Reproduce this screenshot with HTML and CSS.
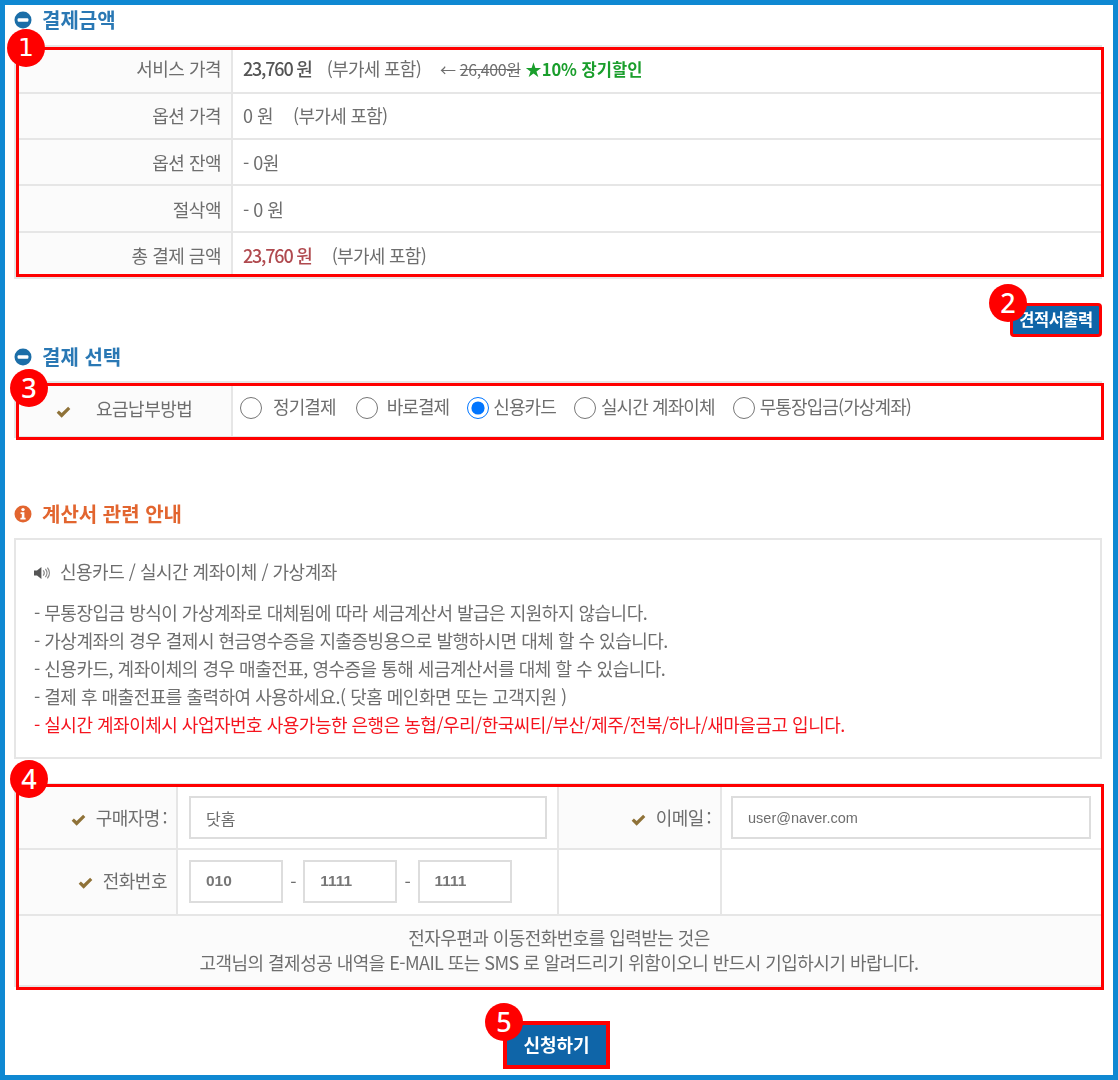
FILE: index.html
```html
<!DOCTYPE html>
<html lang="ko">
<head>
  <meta charset="UTF-8">
  <title>결제금액</title>
  <link rel="stylesheet" href="styles.css">
</head>
<body>
  <svg class="defs" width="0" height="0">
    <symbol id="ico-minus" viewBox="0 0 18 18">
      <circle cx="9" cy="9" r="8.5" fill="currentColor"/>
      <rect x="3.6" y="7.2" width="10.8" height="3.6" rx="1" fill="#fff"/>
    </symbol>
    <symbol id="ico-info" viewBox="0 0 18 18">
      <circle cx="9" cy="9" r="8.5" fill="currentColor"/>
      <circle cx="9" cy="4.6" r="1.7" fill="#fff"/>
      <path d="M6.6 7.2h3.8v5.6h1.2v1.7H6.4v-1.7h1.4V8.9H6.6z" fill="#fff"/>
    </symbol>
    <symbol id="ico-check" viewBox="0 0 16 13">
      <path d="M0.6 7.2 L3 4.8 L6 7.7 L13 0.8 L15.4 3.2 L6 12.6 Z" fill="currentColor"/>
    </symbol>
    <symbol id="ico-sound" viewBox="0 0 16 14">
      <path d="M0 4.6h3L7.4 1v12L3 9.4H0z" fill="#555"/>
      <path d="M9.2 4.4c1.2 1.5 1.2 3.7 0 5.2M11.4 2.8c2 2.4 2 6 0 8.4M13.4 1.6c2.6 3.2 2.6 7.6 0 10.8" fill="none" stroke="#888" stroke-width="1.3"/>
    </symbol>
  </svg>

  <div class="frame">
    <h2 class="head head-blue"><svg class="head-ico"><use href="#ico-minus"/></svg>결제금액</h2>
    <div class="box">
      <table class="tbl tbl-price">
        <tr><th>서비스 가격</th><td><span class="strong">23,760 원</span><span class="tax tax-first">(부가세 포함)</span><span class="was">← <s>26,400원</s></span> <span class="sale">★10% 장기할인</span></td></tr>
        <tr><th>옵션 가격</th><td>0 원<span class="tax">(부가세 포함)</span></td></tr>
        <tr><th>옵션 잔액</th><td>- 0원</td></tr>
        <tr><th>절삭액</th><td>- 0 원</td></tr>
        <tr><th>총 결제 금액</th><td><span class="strong total">23,760 원</span><span class="tax">(부가세 포함)</span></td></tr>
      </table>
      <span class="mark mark-price"></span>
      <span class="badge badge-1">1</span>
    </div>

    <div class="quote-row">
      <a class="btn-quote"><span class="btn-text">견적서출력</span><span class="badge badge-2">2</span></a>
    </div>

    <h2 class="head head-blue head-pay"><svg class="head-ico"><use href="#ico-minus"/></svg>결제 선택</h2>
    <div class="box">
      <table class="tbl tbl-pay">
        <tr>
          <th><svg class="check"><use href="#ico-check"/></svg>요금납부방법</th>
          <td>
            <div class="radios">
              <label class="r1"><input type="radio" name="pay">정기결제</label>
              <label class="r2"><input type="radio" name="pay">바로결제</label>
              <label class="r3"><input type="radio" name="pay" checked>신용카드</label>
              <label class="r4"><input type="radio" name="pay">실시간 계좌이체</label>
              <label class="r5"><input type="radio" name="pay">무통장입금(가상계좌)</label>
            </div>
          </td>
        </tr>
      </table>
      <span class="mark mark-pay"></span>
      <span class="badge badge-3">3</span>
    </div>

    <h2 class="head head-orange"><svg class="head-ico"><use href="#ico-info"/></svg>계산서 관련 안내</h2>
    <div class="notice">
      <p class="notice-title"><svg class="sound"><use href="#ico-sound"/></svg>신용카드 / 실시간 계좌이체 / 가상계좌</p>
      <p>- 무통장입금 방식이 가상계좌로 대체됨에 따라 세금계산서 발급은 지원하지 않습니다.</p>
      <p>- 가상계좌의 경우 결제시 현금영수증을 지출증빙용으로 발행하시면 대체 할 수 있습니다.</p>
      <p>- 신용카드, 계좌이체의 경우 매출전표, 영수증을 통해 세금계산서를 대체 할 수 있습니다.</p>
      <p>- 결제 후 매출전표를 출력하여 사용하세요.( 닷홈 메인화면 또는 고객지원 )</p>
      <p class="warn">- 실시간 계좌이체시 사업자번호 사용가능한 은행은 농협/우리/한국씨티/부산/제주/전북/하나/새마을금고 입니다.</p>
    </div>

    <div class="box box-buyer">
      <table class="tbl tbl-buyer">
        <colgroup><col class="c1"><col class="c2"><col class="c3"><col></colgroup>
        <tr class="row-name">
          <th><svg class="check"><use href="#ico-check"/></svg>구매자명 :</th>
          <td class="inputs"><input class="field" type="text" value="닷홈"></td>
          <th><svg class="check"><use href="#ico-check"/></svg>이메일 :</th>
          <td class="last"><input class="field field-mail" type="text" value="user@naver.com"></td>
        </tr>
        <tr class="row-tel">
          <th><svg class="check"><use href="#ico-check"/></svg>전화번호</th>
          <td class="inputs">
            <div class="phone">
              <input class="field field-tel" type="text" value="010"><span>-</span>
              <input class="field field-tel" type="text" value="1111"><span>-</span>
              <input class="field field-tel" type="text" value="1111">
            </div>
          </td>
          <td></td>
          <td class="last"></td>
        </tr>
        <tr>
          <td class="note" colspan="4">전자우편과 이동전화번호를 입력받는 것은<br>고객님의 결제성공 내역을 E-MAIL 또는 SMS 로 알려드리기 위함이오니 반드시 기입하시기 바랍니다.</td>
        </tr>
      </table>
      <span class="mark mark-buyer"></span>
      <span class="badge badge-4">4</span>
    </div>

    <div class="submit-row">
      <a class="btn-submit"><span class="btn-text">신청하기</span><span class="badge badge-5">5</span></a>
    </div>
  </div>
</body>
</html>
```

FILE: styles.css
```css
* {
  box-sizing: border-box;
}
body {
  margin: 0;
  background: #fff;
  font-family: "Noto Sans CJK KR", "Noto Sans", sans-serif;
  font-size: 18px;
  letter-spacing: -.5px;
  color: #6e6e6e;
}
.defs {
  position: absolute;
}
.frame {
  height: 1080px;
  border: 5px solid #0f88d2;
  padding: 0 9px 0 9px;
  overflow: hidden;
}

/* headings */
.head {
  display: flex;
  align-items: center;
  height: 30px;
  margin: 0 0 10px;
  padding-bottom: 1px;
  font-size: 20px;
  font-weight: 700;
  letter-spacing: 0;
  filter: blur(.5px);
}
.head-blue {
  color: #2a78b4;
}
.head-orange {
  color: #e2652f;
  margin: 61px 0 9px;
}
.head-pay {
  margin: 5px 0 9px;
}
.head-ico {
  width: 18px;
  height: 18px;
  margin: 1px 10px 0 0;
}
.head-blue .head-ico {
  color: #1b6ea8;
}
.head-orange .head-ico {
  color: #e2652f;
}

/* tables */
.box {
  position: relative;
}
.tbl {
  width: 1088px;
  border-collapse: collapse;
  border-top: 2px solid #e6e6e6;
  border-left: 2px solid #e6e6e6;
  filter: blur(.5px);
}
.tbl th,
.tbl td {
  height: 46px;
  padding: 0 10px 3px;
  border-bottom: 2px solid #e6e6e6;
  font-weight: 400;
}
.tbl th {
  width: 217px;
  background: #fbfbfb;
  text-align: right;
  border-right: 2px solid #e6e6e6;
}
.tbl-price tr:nth-child(1) th,
.tbl-price tr:nth-child(4) th {
  height: 47px;
}
.tbl-price tr:nth-child(3) th,
.tbl-price tr:nth-child(3) td {
  padding-bottom: 1px;
}
.tbl-price tr:nth-child(n+4) th,
.tbl-price tr:nth-child(n+4) td {
  padding-bottom: 0;
}
.strong {
  font-weight: 500;
  color: #555;
  letter-spacing: -1.2px;
}
.total {
  color: #b04a4f;
}
.tax {
  margin-left: 20px;
  letter-spacing: -.7px;
}
.tax-first {
  margin-left: 15px;
}
.was {
  margin-left: 19px;
  font-size: 16px;
  letter-spacing: -.4px;
}
.sale {
  color: #1a9e2c;
  font-size: 16.5px;
  font-weight: 700;
  letter-spacing: 0;
}
.check {
  width: 15px;
  height: 12px;
  color: #8f7238;
}

/* pay */
.tbl-pay th,
.tbl-pay td {
  height: 55px;
}
.tbl-pay th {
  text-align: left;
  padding-left: 40px;
}
.tbl-pay td {
  padding-bottom: 7px;
}
.tbl-pay .check {
  margin-right: 25px;
  vertical-align: -2px;
}
.radios {
  display: flex;
  margin-left: -3px;
  letter-spacing: -.9px;
}
.radios label {
  display: flex;
  align-items: center;
}
.radios input {
  width: 22px;
  height: 22px;
  margin: 4px 5px 0 0;
}
.r1 input { margin-right: 11px; }
.r2 { margin-left: 20px; }
.r2 input { margin-right: 9px; }
.r3 { margin-left: 18px; }
.r3 input { margin-right: 4px; }
.r4 { margin-left: 18px; }
.r5 { margin-left: 18px; }

/* overlays */
.mark {
  position: absolute;
  border: 3px solid #f00;
  pointer-events: none;
}
.mark-price {
  top: 2px;
  left: 2px;
  right: 0;
  bottom: 2px;
}
.mark-pay {
  top: 2px;
  left: 2px;
  right: 0;
  bottom: -2px;
}
.mark-buyer {
  top: 1px;
  left: 2px;
  right: 0;
  bottom: -3px;
}
.badge {
  position: absolute;
  width: 38px;
  height: 38px;
  border-radius: 50%;
  background: #f00;
  color: #fff;
  font-family: "Noto Sans", sans-serif;
  font-size: 27px;
  font-weight: 500;
  letter-spacing: 0;
  line-height: 38px;
  text-align: center;
}
.badge-1 {
  left: -7px;
  top: -16px;
  font-family: "DejaVu Sans", sans-serif;
  font-size: 25px;
}
.badge-2 { left: -24px; top: -22px; }
.badge-3 { left: -4px; top: -12px; }
.badge-4 { left: -4px; top: -23px; }
.badge-5 { left: -22px; top: -22px; }

/* buttons */
.quote-row {
  display: flex;
  justify-content: flex-end;
  margin: 24px 2px 0 0;
}
.btn-quote,
.btn-submit {
  position: relative;
  display: flex;
  align-items: center;
  justify-content: center;
  padding-bottom: 2px;
  background: #0f65a8;
  color: #fff;
  font-weight: 700;
}
.btn-quote {
  width: 92px;
  height: 34px;
  border: 3px solid #f00;
  border-radius: 4px;
  font-size: 16.5px;
}
.btn-text {
  filter: blur(.4px);
}
.submit-row {
  display: flex;
  justify-content: center;
  margin: 34px 5px 0 0;
}
.btn-submit {
  width: 107px;
  height: 48px;
  border: 4px solid #f00;
  font-size: 18px;
  letter-spacing: 0;
}

/* notice */
.notice {
  width: 1088px;
  height: 221px;
  padding: 17px 18px 0;
  border: 2px solid #e6e6e6;
  filter: blur(.5px);
}
.notice p {
  margin: 0;
  line-height: 28px;
}
.notice .notice-title {
  margin-bottom: 13px;
}
.sound {
  width: 16px;
  height: 14px;
  margin-right: 10px;
  vertical-align: -1px;
}
.warn {
  color: #f5141e;
}

/* buyer */
.box-buyer {
  margin-top: 24px;
}
.tbl-buyer {
  table-layout: fixed;
}
.c1 { width: 162px; }
.c2 { width: 381px; }
.c3 { width: 163px; }
.tbl-buyer th,
.tbl-buyer td {
  width: auto;
  padding-bottom: 0;
  border-right: 2px solid #e6e6e6;
}
.tbl-buyer .inputs {
  padding-left: 11px;
}
.tbl-buyer .last {
  border-right: 0;
}
.row-name th,
.row-name td {
  height: 65px;
}
.tbl-buyer .row-name td {
  padding-top: 2px;
}
.row-name th {
  word-spacing: -2px;
}
.row-tel th,
.row-tel td {
  height: 66px;
}
.tbl-buyer .row-tel th {
  padding-bottom: 5px;
}
.tbl-buyer .row-tel td {
  padding-bottom: 2px;
}
.tbl-buyer th .check {
  margin-right: 10px;
  vertical-align: -1px;
}
.tbl-buyer th {
  padding-right: 9px;
}
.field {
  display: block;
  width: 100%;
  height: 43px;
  padding: 0 15px;
  border: 2px solid #ddd;
  font: inherit;
  font-size: 16px;
  color: #6e6e6e;
}
.field-mail {
  width: 360px;
  margin-left: -1px;
  font-family: "Liberation Sans", sans-serif;
  font-size: 14.5px;
}
.phone {
  display: flex;
  align-items: center;
  gap: 7.25px;
}
.field-tel {
  width: 94px;
  font-family: "Liberation Sans", sans-serif;
  font-weight: 700;
  font-size: 15.5px;
  color: #777;
}
.tbl-buyer .note {
  height: 71px;
  padding: 0 0 2px;
  background: #fbfbfb;
  text-align: center;
  line-height: 25px;
  letter-spacing: -.55px;
  border-right: 0;
}
```
